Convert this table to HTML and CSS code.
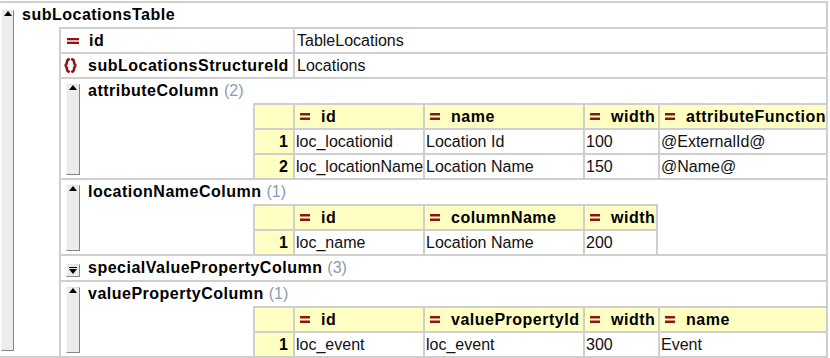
FILE: index.html
```html
<!DOCTYPE html>
<html lang="en">
<head>
    <meta charset="UTF-8">
    <meta name="viewport" content="width=device-width, initial-scale=1.0">
    <title>subLocationsTable</title>
    <link rel="stylesheet" href="styles.css">
</head>
<body>
<div class="grid">
    <div class="el">
        <div class="gutter top"><div class="bar"><span class="up"></span></div></div>
        <div class="el-main">
            <div class="el-head">subLocationsTable</div>
            <div class="el-body">

                <div class="attr">
                    <div class="attr-name">
                        <svg class="eq" width="12" height="6" viewBox="0 0 12 6"><rect width="12" height="2.3"/><rect y="3.7" width="12" height="2.3"/></svg>id
                    </div>
                    <div class="attr-value">TableLocations</div>
                </div>

                <div class="attr">
                    <div class="attr-name">
                        <svg class="brace" width="15" height="15" viewBox="0 0 15 15"><path d="M5.8 1.4C3.4 1.8 4.2 5 3.4 6.2 3 6.9 2.2 7.5 1.5 7.5 2.2 7.5 3 8.1 3.4 8.8 4.2 10 3.4 13.2 5.8 13.6"/><path d="M9.2 1.4C11.6 1.8 10.8 5 11.6 6.2 12 6.9 12.8 7.5 13.5 7.5 12.8 7.5 12 8.1 11.6 8.8 10.8 10 11.6 13.2 9.2 13.6"/></svg>subLocationsStructureId
                    </div>
                    <div class="attr-value">Locations</div>
                </div>

                <div class="child">
                    <div class="gutter sub"><div class="bar"><span class="up"></span></div></div>
                    <div class="child-main">
                        <div class="child-head">attributeColumn <span class="count">(2)</span></div>
                        <div class="tbl five">
                            <div class="c num"></div>
                            <div class="c hd"><svg class="eq-sm" width="10" height="7" viewBox="0 0 10 7"><rect width="10" height="2.5"/><rect y="4.5" width="10" height="2.5"/></svg>id</div>
                            <div class="c hd"><svg class="eq-sm" width="10" height="7" viewBox="0 0 10 7"><rect width="10" height="2.5"/><rect y="4.5" width="10" height="2.5"/></svg>name</div>
                            <div class="c hd"><svg class="eq-sm" width="10" height="7" viewBox="0 0 10 7"><rect width="10" height="2.5"/><rect y="4.5" width="10" height="2.5"/></svg>width</div>
                            <div class="c hd"><svg class="eq-sm" width="10" height="7" viewBox="0 0 10 7"><rect width="10" height="2.5"/><rect y="4.5" width="10" height="2.5"/></svg>attributeFunction</div>

                            <div class="c num">1</div>
                            <div class="c">loc_locationid</div>
                            <div class="c">Location Id</div>
                            <div class="c">100</div>
                            <div class="c">@ExternalId@</div>

                            <div class="c num">2</div>
                            <div class="c">loc_locationName</div>
                            <div class="c">Location Name</div>
                            <div class="c">150</div>
                            <div class="c">@Name@</div>
                        </div>
                    </div>
                </div>

                <div class="child">
                    <div class="gutter sub"><div class="bar"><span class="up"></span></div></div>
                    <div class="child-main">
                        <div class="child-head">locationNameColumn <span class="count">(1)</span></div>
                        <div class="tbl four">
                            <div class="c num"></div>
                            <div class="c hd"><svg class="eq-sm" width="10" height="7" viewBox="0 0 10 7"><rect width="10" height="2.5"/><rect y="4.5" width="10" height="2.5"/></svg>id</div>
                            <div class="c hd"><svg class="eq-sm" width="10" height="7" viewBox="0 0 10 7"><rect width="10" height="2.5"/><rect y="4.5" width="10" height="2.5"/></svg>columnName</div>
                            <div class="c hd last"><svg class="eq-sm" width="10" height="7" viewBox="0 0 10 7"><rect width="10" height="2.5"/><rect y="4.5" width="10" height="2.5"/></svg>width</div>

                            <div class="c num">1</div>
                            <div class="c">loc_name</div>
                            <div class="c">Location Name</div>
                            <div class="c last">200</div>
                        </div>
                    </div>
                </div>

                <div class="child collapsed">
                    <div class="gutter sub"><div class="btn"><span class="cap"></span><span class="down"></span></div></div>
                    <div class="child-main">
                        <div class="child-head">specialValuePropertyColumn <span class="count">(3)</span></div>
                    </div>
                </div>

                <div class="child">
                    <div class="gutter sub"><div class="bar"><span class="up"></span></div></div>
                    <div class="child-main">
                        <div class="child-head">valuePropertyColumn <span class="count">(1)</span></div>
                        <div class="tbl five">
                            <div class="c num"></div>
                            <div class="c hd"><svg class="eq-sm" width="10" height="7" viewBox="0 0 10 7"><rect width="10" height="2.5"/><rect y="4.5" width="10" height="2.5"/></svg>id</div>
                            <div class="c hd"><svg class="eq-sm" width="10" height="7" viewBox="0 0 10 7"><rect width="10" height="2.5"/><rect y="4.5" width="10" height="2.5"/></svg>valuePropertyId</div>
                            <div class="c hd"><svg class="eq-sm" width="10" height="7" viewBox="0 0 10 7"><rect width="10" height="2.5"/><rect y="4.5" width="10" height="2.5"/></svg>width</div>
                            <div class="c hd"><svg class="eq-sm" width="10" height="7" viewBox="0 0 10 7"><rect width="10" height="2.5"/><rect y="4.5" width="10" height="2.5"/></svg>name</div>

                            <div class="c num">1</div>
                            <div class="c">loc_event</div>
                            <div class="c">loc_event</div>
                            <div class="c">300</div>
                            <div class="c">Event</div>
                        </div>
                    </div>
                </div>

            </div>
        </div>
    </div>
</div>
</body>
</html>
```

FILE: styles.css
```css
* {
    box-sizing: border-box;
}

body {
    margin: 0;
    background: #fff;
    font-family: "Liberation Sans", Arial, sans-serif;
    font-size: 16px;
    color: #111;
}

.grid {
    width: 828px;
    margin-top: 1px;
    border-top: 2px solid #cfcfcf;
    border-right: 2px solid #cfcfcf;
    border-bottom: 2px solid #cfcfcf;
}

.el {
    display: flex;
}

/* collapse bars on the left */
.gutter {
    display: flex;
    flex-direction: column;
    flex: none;
}
.gutter.top {
    width: 20px;
    padding: 7px 6px 5px 1px;
}
.gutter.sub {
    width: 24px;
    padding: 5px 5px 3px 5px;
}

.bar {
    flex: 1;
    display: flex;
    justify-content: center;
    background: #ececec;
    border: 1px solid;
    border-color: #e2e2e2 #858585 #858585 #f6f6f6;
}

.up {
    width: 0;
    height: 0;
    border-left: 4px solid transparent;
    border-right: 4px solid transparent;
    border-bottom: 5px solid #000;
}

.btn {
    height: 13px;
    margin-top: 3px;
    display: flex;
    flex-direction: column;
    align-items: center;
    padding-top: 2px;
    background: #ececec;
    border: 1px solid;
    border-color: #e2e2e2 #858585 #858585 #f6f6f6;
}
.btn .cap {
    width: 8px;
    height: 1px;
    background: #000;
    margin-bottom: 1px;
}
.btn .down {
    width: 0;
    height: 0;
    border-left: 4px solid transparent;
    border-right: 4px solid transparent;
    border-top: 5px solid #000;
}

.el-main {
    flex: 1;
}

.el-head {
    height: 24px;
    line-height: 24px;
    padding-left: 2px;
    font-weight: bold;
    letter-spacing: 0.5px;
    color: #000;
}

.el-body {
    margin-left: 39px;
    border-left: 2px solid #cfcfcf;
}

/* attribute rows */
.attr {
    display: flex;
    height: 25px;
    border-top: 2px solid #cfcfcf;
}
.attr-name {
    width: 232px;
    display: flex;
    align-items: center;
    padding-left: 5px;
    font-weight: bold;
    letter-spacing: 0.5px;
    color: #000;
    white-space: nowrap;
}
.attr-value {
    flex: 1;
    line-height: 23px;
    padding-left: 2px;
    border-left: 2px solid #cfcfcf;
}

.eq {
    fill: #8c1515;
    margin: 1px 10px 0 1px;
}
.brace {
    flex: none;
    fill: none;
    stroke: #8c1515;
    stroke-width: 2.6;
    stroke-linecap: round;
    margin: 0 10px 0 -3px;
}
.eq-sm {
    fill: #8c1515;
    flex: none;
    margin-right: 11px;
}

/* child elements */
.child {
    display: flex;
    border-top: 2px solid #cfcfcf;
}
.child-main {
    flex: 1;
}
.child-head {
    height: 24px;
    line-height: 24px;
    padding-left: 3px;
    font-weight: bold;
    letter-spacing: 0.5px;
    color: #000;
}
.collapsed .child-head {
    height: 23px;
    line-height: 23px;
}
.count {
    font-weight: normal;
    letter-spacing: 0;
    color: #8b9ab3;
}

/* tables */
.tbl {
    display: grid;
    margin-left: 168px;
}
.tbl.five {
    grid-template-columns: 40px 130px 160px 75px 168px;
}
.tbl.four {
    grid-template-columns: 40px 130px 160px 75px;
}

.c {
    height: 25px;
    line-height: 23px;
    padding-left: 1px;
    border-top: 2px solid #cfcfcf;
    border-left: 2px solid #cfcfcf;
    white-space: nowrap;
    overflow: hidden;
}
.c.last {
    border-right: 2px solid #cfcfcf;
}
.hd {
    display: flex;
    align-items: center;
    padding-left: 5px;
    background: #ffffc4;
    font-weight: bold;
    letter-spacing: 0.5px;
    color: #000;
}
.num {
    background: #ffffc4;
    font-weight: bold;
    text-align: right;
    padding-right: 5px;
    color: #000;
}
```
